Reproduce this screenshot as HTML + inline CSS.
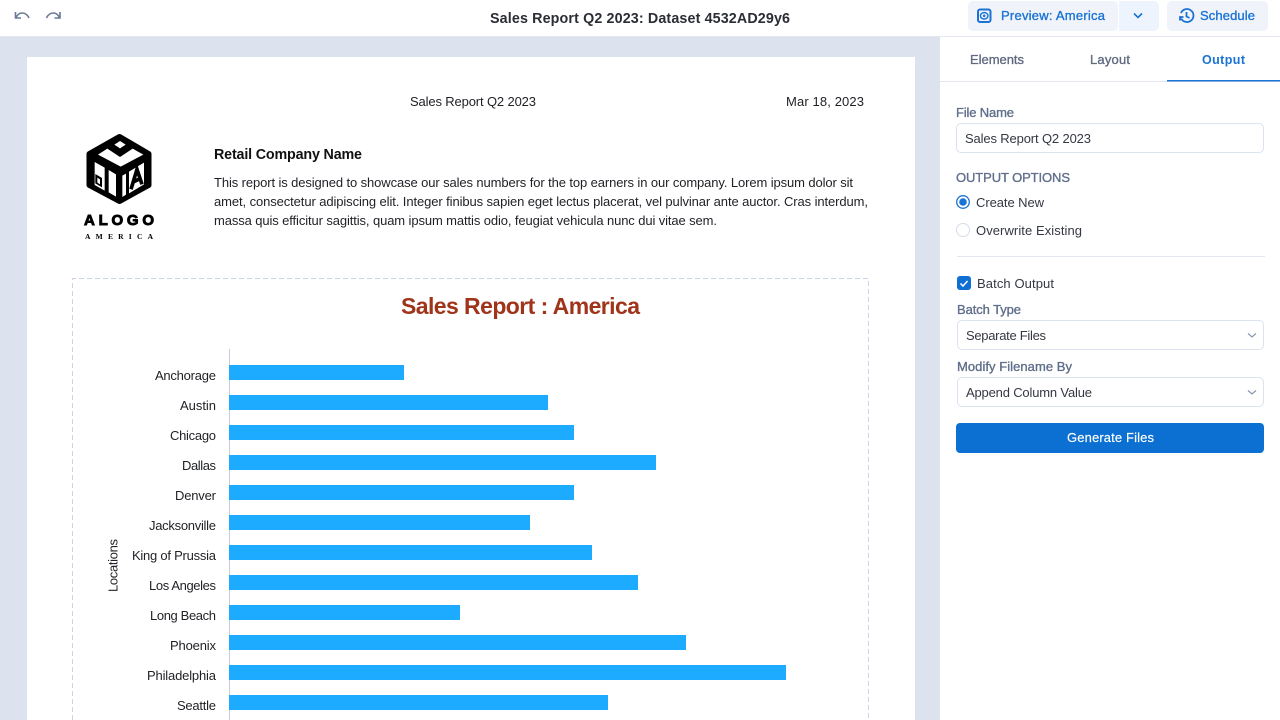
<!DOCTYPE html>
<html><head><meta charset="utf-8"><title>Sales Report</title>
<style>
html,body{margin:0;padding:0;width:1280px;height:720px;overflow:hidden;background:#dce3ef}
svg{display:block}
text{font-family:"Liberation Sans",sans-serif;font-size:13px;fill:#1f2025}
.m{stroke-width:.35px;paint-order:stroke}
.lab{fill:#5f6e8a;stroke:#5f6e8a}
.blue{fill:#1a73d4;stroke:#1a73d4}
.tab{fill:#5f6a80;stroke:#5f6a80}
.ui{fill:#343842}
</style></head><body>
<svg width="1280" height="720" viewBox="0 0 1280 720" xmlns="http://www.w3.org/2000/svg">
<rect width="1280" height="720" fill="#dce3ef"/>
<!-- top bar -->
<rect width="1280" height="36" fill="#fff"/>
<rect y="36" width="1280" height="1" fill="#e3e7f0"/>
<g fill="none" stroke="#6a7a96" stroke-width="1.600">
<path d="M15.500 12v6H21M16 17.500c1.500-2.800 3.500-4.500 6-4.500 3 0 5.500 1.700 7 5"/>
<path d="M60 12v6h-5.500M59.500 17.500c-1.500-2.800-3.500-4.500-6-4.500-3 0-5.500 1.700-7 5"/>
</g>
<text x="490" y="23" textLength="300" font-weight="bold" style="font-size:14.300px;fill:#2a2d34">Sales Report Q2 2023: Dataset 4532AD29y6</text>
<rect x="968" y="1" width="150" height="30" rx="5" fill="#f0f3f9"/>
<path d="M1119 1h35a5 5 0 0 1 5 5v20a5 5 0 0 1-5 5h-35z" fill="#eef4fd"/>
<rect x="978" y="9.500" width="12.500" height="12.500" rx="2" fill="none" stroke="#1a73d4" stroke-width="2"/>
<ellipse cx="984.200" cy="15.800" rx="3.800" ry="3.200" fill="none" stroke="#1a73d4" stroke-width="1.400"/>
<circle cx="984.200" cy="15.800" r="1.300" fill="#1a73d4"/>
<text x="1001" y="20" textLength="104" class="m blue">Preview: America</text>
<path d="M1134 13.500l4 4 4-4" fill="none" stroke="#1a73d4" stroke-width="1.600"/>
<rect x="1167" y="1" width="101" height="30" rx="5" fill="#f0f3f9"/>
<path d="M1181 13a6.500 6.500 0 1 1 .2 5.500M1186.500 12v4.500l3 1.500M1180 20.500v-3.500h3.500" fill="none" stroke="#1a73d4" stroke-width="1.800"/>
<text x="1200" y="20" textLength="55" class="m blue">Schedule</text>
<!-- page -->
<rect x="27" y="57" width="888" height="663" fill="#fff"/>
<text x="410" y="106" textLength="126">Sales Report Q2 2023</text>
<text x="786" y="106" textLength="78">Mar 18, 2023</text>
<!-- logo -->
<path d="M119.500 137L148.500 154V185L119.500 201L89.500 185V154Z" fill="#000" stroke="#000" stroke-width="6" stroke-linejoin="round"/>
<g transform="translate(80 130) scale(.3333)">
<g fill="#fff">
<path d="M120 33L137 44L120 55L103 44Z"/>
<path d="M82 56L120 81L158 56L190 74L122 110L54 74Z"/>
<path d="M44 96L74 113V182L44 165Z"/>
<path d="M86 120L108 133V200L86 187Z"/>
<path d="M127 137L138 131V194L127 201Z"/>
<path d="M147 125L192 98V163L147 190Z"/>
</g>
<path d="M46 132L66 144V172L46 160Z" fill="#000"/>
<path d="M52 143L60 148V163L52 158Z" fill="#fff"/>
<path d="M153 178L171 118L186 163M160 156L180 146" fill="none" stroke="#000" stroke-width="11"/>
</g>
<text x="84" y="225" textLength="70" font-weight="bold" style="font-size:15px;fill:#000;stroke:#000;stroke-width:.9px">ALOGO</text>
<text x="85" y="239" textLength="68" font-weight="bold" style="font-family:'Liberation Serif',serif;font-size:7.500px;fill:#000">AMERICA</text>
<text x="214" y="159" textLength="148" font-weight="bold" style="font-size:14.300px;fill:#111">Retail Company Name</text>
<text x="214" y="187" textLength="639">This report is designed to showcase our sales numbers for the top earners in our company. Lorem ipsum dolor sit</text>
<text x="214" y="206" textLength="654">amet, consectetur adipiscing elit. Integer finibus sapien eget lectus placerat, vel pulvinar ante auctor. Cras interdum,</text>
<text x="214" y="225" textLength="503">massa quis efficitur sagittis, quam ipsum mattis odio, feugiat vehicula nunc dui vitae sem.</text>
<!-- chart -->
<path d="M72.500 720V278.500H868.500V720" fill="none" stroke="#c9d5e8" stroke-width="1" stroke-dasharray="5 3"/>
<text x="401" y="314" textLength="239" font-weight="bold" style="font-size:23px;fill:#a0341b">Sales Report : America</text>
<g fill="#1cabff">
<rect x="229" y="365" width="175" height="15"/>
<rect x="229" y="395" width="319" height="15"/>
<rect x="229" y="425" width="345" height="15"/>
<rect x="229" y="455" width="427" height="15"/>
<rect x="229" y="485" width="345" height="15"/>
<rect x="229" y="515" width="301" height="15"/>
<rect x="229" y="545" width="363" height="15"/>
<rect x="229" y="575" width="409" height="15"/>
<rect x="229" y="605" width="231" height="15"/>
<rect x="229" y="635" width="457" height="15"/>
<rect x="229" y="665" width="557" height="15"/>
<rect x="229" y="695" width="379" height="15"/>
</g>
<path d="M229.500 349V365M229.500 380V395M229.500 410V425M229.500 440V455M229.500 470V485M229.500 500V515M229.500 530V545M229.500 560V575M229.500 590V605M229.500 620V635M229.500 650V665M229.500 680V695M229.500 710V720" stroke="#c5cde0" stroke-width="1"/>
<text x="155" y="380" textLength="61">Anchorage</text>
<text x="180" y="410" textLength="36">Austin</text>
<text x="170" y="440" textLength="46">Chicago</text>
<text x="182" y="470" textLength="34">Dallas</text>
<text x="175" y="500" textLength="41">Denver</text>
<text x="149" y="530" textLength="67">Jacksonville</text>
<text x="132" y="560" textLength="84">King of Prussia</text>
<text x="149" y="590" textLength="67">Los Angeles</text>
<text x="150" y="620" textLength="66">Long Beach</text>
<text x="170" y="650" textLength="46">Phoenix</text>
<text x="147" y="680" textLength="69">Philadelphia</text>
<text x="177" y="710" textLength="39">Seattle</text>
<text transform="translate(117.500 592) rotate(-90)" textLength="53">Locations</text>
<!-- right panel -->
<rect x="940" y="37" width="340" height="683" fill="#fff"/>
<rect x="940" y="81" width="340" height="1" fill="#e3e7f0"/>
<rect x="1167" y="80" width="113" height="1.500" fill="#1a73d4"/>
<text x="970" y="64" textLength="54" class="m tab">Elements</text>
<text x="1090" y="64" textLength="40" class="m tab">Layout</text>
<text x="1202" y="64" textLength="43" font-weight="bold" style="font-size:12.500px;fill:#1a73d4">Output</text>
<text x="956" y="117" textLength="58" class="m lab">File Name</text>
<rect x="956.500" y="123.500" width="307" height="29" rx="4.500" fill="#fff" stroke="#dbe2f0"/>
<text x="965" y="143" textLength="126" class="ui">Sales Report Q2 2023</text>
<text x="956" y="182" textLength="114" class="m lab">OUTPUT OPTIONS</text>
<circle cx="963" cy="202" r="6.300" fill="#fff" stroke="#1a73d4" stroke-width="1.300"/>
<circle cx="963" cy="202" r="3.800" fill="#1a73d4"/>
<text x="976" y="207" textLength="68" class="ui">Create New</text>
<circle cx="963" cy="230" r="6.500" fill="#fff" stroke="#d5dcea"/>
<text x="976" y="235" textLength="106" class="ui">Overwrite Existing</text>
<rect x="957" y="256" width="308" height="1" fill="#e3e7f0"/>
<rect x="957" y="276" width="14" height="14" rx="3" fill="#0f6fd3"/>
<path d="M960.500 283.500l2.500 2.500 4.500-5" fill="none" stroke="#fff" stroke-width="1.500"/>
<text x="977" y="288" textLength="77" class="ui">Batch Output</text>
<text x="957" y="314" textLength="64" class="m lab">Batch Type</text>
<rect x="957.500" y="320.500" width="306" height="29" rx="4.500" fill="#fff" stroke="#dbe2f0"/>
<text x="966" y="340" textLength="80" class="ui">Separate Files</text>
<path d="M1248 333.500l4 3.500 4-3.500" fill="none" stroke="#8a97ae" stroke-width="1.200"/>
<text x="957" y="371" textLength="115" class="m lab">Modify Filename By</text>
<rect x="957.500" y="377.500" width="306" height="29" rx="4.500" fill="#fff" stroke="#dbe2f0"/>
<text x="966" y="397" textLength="126" class="ui">Append Column Value</text>
<path d="M1248 390.500l4 3.500 4-3.500" fill="none" stroke="#8a97ae" stroke-width="1.200"/>
<rect x="956" y="423" width="308" height="30" rx="4" fill="#0b70d1"/>
<text x="1067" y="442" textLength="87" class="m" style="fill:#fff;stroke:#fff;stroke-width:.15px">Generate Files</text>
</svg>
</body></html>
